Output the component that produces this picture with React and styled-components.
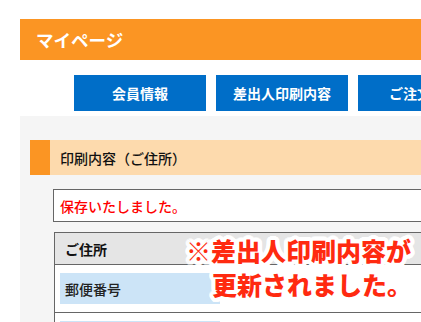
import React from "react";
import styled, { createGlobalStyle } from "styled-components";

const Global = createGlobalStyle`
  html, body { margin: 0; padding: 0; background: #fff; overflow: hidden; }
  body { font-family: "Noto Sans CJK JP", "Noto Sans", sans-serif; color: #111; }
`;

const outline = (() => {
  const parts = [];
  const r = 4;
  for (let i = 0; i < 24; i++) {
    const a = (i / 24) * Math.PI * 2;
    parts.push(`${(Math.cos(a) * r).toFixed(1)}px ${(Math.sin(a) * r).toFixed(1)}px 0 #fff`);
  }
  parts.push("0 0 3px #fff");
  return parts.join(", ");
})();

const Page = styled.div`
  position: relative;
  width: 960px;
  padding: 19px 0 0 20px;
`;

const Header = styled.div`
  height: 41px;
  background: #fb9523;
  color: #fff;
  font-size: 17.5px;
  font-weight: 700;
  display: flex;
  align-items: center;
  padding-left: 16px;
`;

const Nav = styled.nav`
  display: flex;
  gap: 10px;
  margin-top: 15px;
  padding-left: 54px;
`;

const NavButton = styled.div`
  width: 132px;
  height: 36px;
  background: #006ec8;
  color: #fff;
  font-size: 14px;
  font-weight: 700;
  display: flex;
  align-items: center;
  justify-content: center;
`;

const Panel = styled.div`
  margin-top: 5px;
  background: #f5f5f5;
  padding: 24px 0 20px 10px;
`;

const SectionTitle = styled.div`
  height: 35px;
  background: #fddaad;
  border-left: 20px solid #fb9523;
  padding-left: 10px;
  display: flex;
  align-items: center;
  font-size: 14px;
  font-weight: 500;
  color: #111;
`;

const Message = styled.div`
  margin: 14px 0 0 23px;
  height: 31px;
  border: 1px solid #666;
  background: #fff;
  color: #f00;
  font-size: 14px;
  font-weight: 500;
  display: flex;
  align-items: center;
  padding-left: 6px;
`;

const Table = styled.div`
  margin: 10px 0 0 24px;
  border: 1px solid #666;
  background: #fff;
`;

const HeadRow = styled.div`
  height: 31px;
  background: #e5e5e5;
  border-bottom: 1px solid #666;
  display: flex;
  align-items: center;
  padding-left: 10px;
  font-size: 14px;
  font-weight: 700;
`;

const Row = styled.div`
  padding: 8px 0 8px 5px;
  border-bottom: 1px solid #666;
`;

const Label = styled.div`
  width: 160px;
  height: 31px;
  background: #cce4f7;
  display: flex;
  align-items: center;
  padding-left: 5px;
  box-sizing: border-box;
  font-size: 14px;
  font-weight: 500;
  color: #222;
`;

const Callout = styled.div`
  position: absolute;
  left: 186px;
  top: 233px;
  color: #ff2a10;
  font-size: 25px;
  font-weight: 900;
  line-height: 34px;
  white-space: nowrap;
  text-shadow: ${outline};
`;

const Indent = styled.span`
  display: inline-block;
  width: 26px;
`;

export default function App() {
  return (
    <>
      <Global />
      <Page>
        <Header>マイページ</Header>
        <Nav>
          <NavButton>会員情報</NavButton>
          <NavButton>差出人印刷内容</NavButton>
          <NavButton>ご注文履歴</NavButton>
        </Nav>
        <Panel>
          <SectionTitle>印刷内容（ご住所）</SectionTitle>
          <Message>保存いたしました。</Message>
          <Table>
            <HeadRow>ご住所</HeadRow>
            <Row>
              <Label>郵便番号</Label>
            </Row>
            <Row>
              <Label>住所</Label>
            </Row>
          </Table>
        </Panel>
        <Callout>
          ※差出人印刷内容が
          <br />
          <Indent />更新されました。
        </Callout>
      </Page>
    </>
  );
}
